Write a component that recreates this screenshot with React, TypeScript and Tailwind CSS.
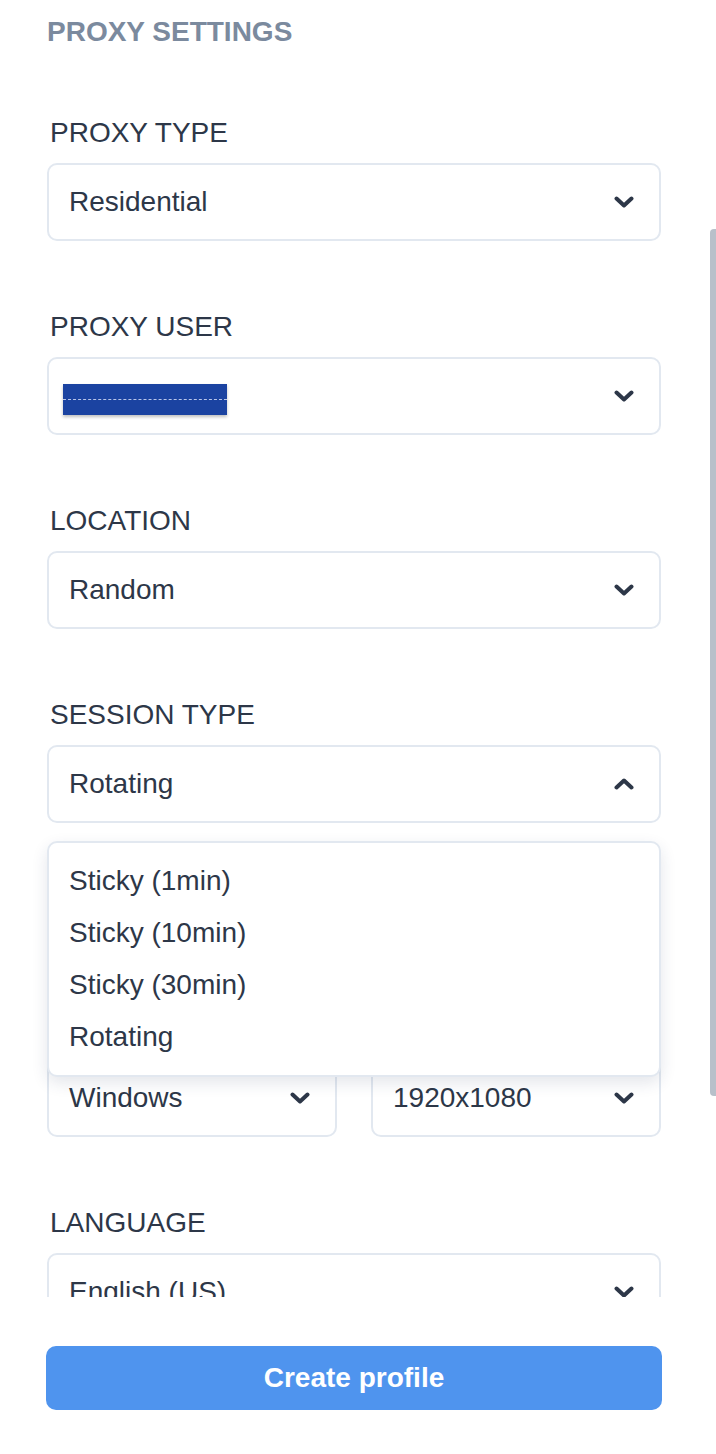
import { ReactNode } from 'react'

// Thick chevron used on every select
function Chevron({ up = false }: { up?: boolean }) {
  return (
    <svg width="20" height="12" viewBox="0 0 20 12" className="shrink-0">
      <polyline
        points={up ? '2.5,9.5 10,2.5 17.5,9.5' : '2.5,2.5 10,9.5 17.5,2.5'}
        fill="none"
        stroke="#2d3748"
        strokeWidth="4"
        strokeLinecap="round"
        strokeLinejoin="round"
      />
    </svg>
  )
}

function SelectBox({ children, open = false }: { children: ReactNode; open?: boolean }) {
  return (
    <div className="h-[78px] border-2 border-[#e2e8f0] rounded-[10px] bg-white pl-[20px] pr-[25px] flex items-center justify-between">
      <div className="text-[28px] leading-[35px] text-[#2d3748] -mt-[2px]">{children}</div>
      <Chevron up={open} />
    </div>
  )
}

function Label({ children }: { children: ReactNode }) {
  return (
    <div className="pl-[3px] mb-[13px] text-[28px] leading-[35px] text-[#2d3748]">{children}</div>
  )
}

const sessionOptions = ['Sticky (1min)', 'Sticky (10min)', 'Sticky (30min)', 'Rotating']

export default function App() {
  return (
    <div className="relative w-[716px] h-[1454px] bg-white overflow-hidden font-['Liberation_Sans',Arial,sans-serif]">
      {/* Scrollable form */}
      <div className="h-[1297px] overflow-hidden pl-[47px] pr-[55px]">
        <h2 className="pt-[14px] text-[28px] leading-[35px] font-bold text-[#7b8a9e]">PROXY SETTINGS</h2>

        <div className="mt-[66px]">
          <Label>PROXY TYPE</Label>
          <SelectBox>Residential</SelectBox>
        </div>

        <div className="mt-[68px]">
          <Label>PROXY USER</Label>
          <SelectBox>
            {/* redacted value */}
            <div className="relative -ml-[6px] mt-[8px] w-[164px] h-[31px] bg-[#1b43a1] shadow-[0_2px_3px_rgba(0,0,0,0.25)] flex items-center">
              <div className="w-full border-t border-dashed border-[#b9c6ea]" />
            </div>
          </SelectBox>
        </div>

        <div className="mt-[68px]">
          <Label>LOCATION</Label>
          <SelectBox>Random</SelectBox>
        </div>

        <div className="mt-[68px]">
          <Label>SESSION TYPE</Label>
          <div className="relative">
            <SelectBox open>Rotating</SelectBox>
            {/* Open dropdown menu */}
            <div className="absolute z-10 left-0 right-0 top-[96px] bg-white border-2 border-[#e2e8f0] rounded-[10px] pt-[12px] pb-[12px] shadow-[0_6px_16px_rgba(30,50,90,0.12)]">
              {sessionOptions.map((opt) => (
                <div key={opt} className="h-[52px] leading-[52px] pl-[20px] text-[28px] text-[#2d3748]">
                  {opt}
                </div>
              ))}
            </div>
          </div>
        </div>

        <div className="mt-[188px] grid grid-cols-2 gap-x-[34px]">
          <div>
            <Label>OS</Label>
            <SelectBox>Windows</SelectBox>
          </div>
          <div>
            <Label>RESOLUTION</Label>
            <SelectBox>1920x1080</SelectBox>
          </div>
        </div>

        <div className="mt-[68px]">
          <Label>LANGUAGE</Label>
          <SelectBox>English (US)</SelectBox>
        </div>
      </div>

      {/* Footer */}
      <div className="pl-[46px] pt-[49px]">
        <button className="w-[616px] h-[64px] rounded-[10px] bg-[#4f94ee] text-white text-[28px] font-bold">
          Create profile
        </button>
      </div>

      {/* Scrollbar thumb */}
      <div className="absolute right-0 top-[229px] h-[867px] w-[6px] rounded-l-[4px] bg-[#b8c0ca]" />
    </div>
  )
}
